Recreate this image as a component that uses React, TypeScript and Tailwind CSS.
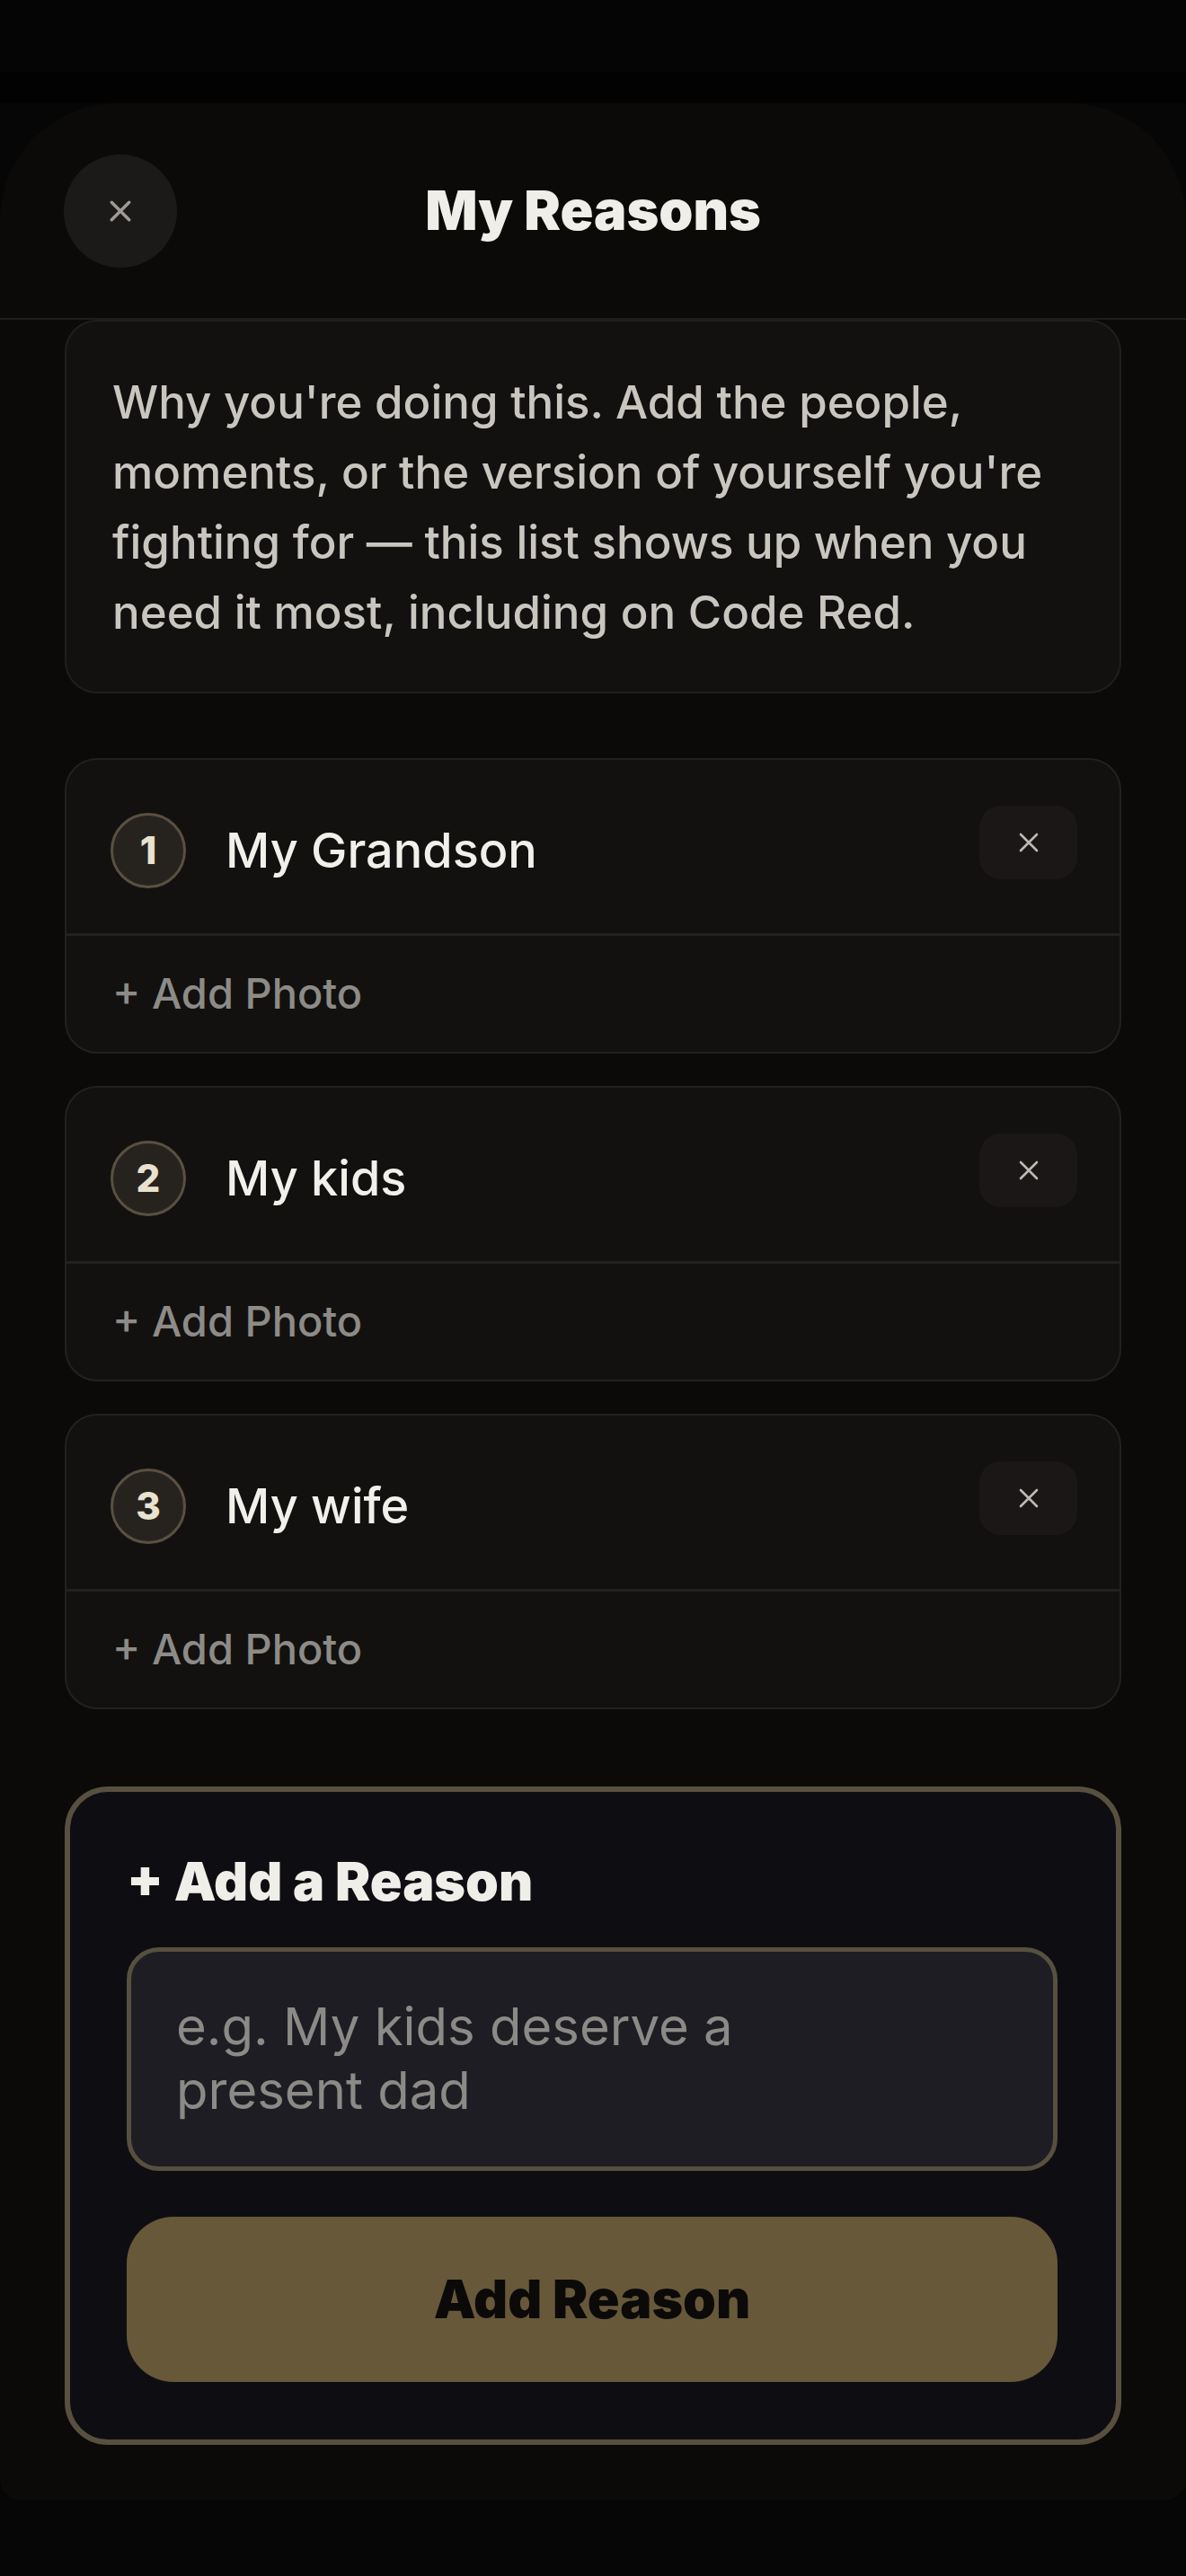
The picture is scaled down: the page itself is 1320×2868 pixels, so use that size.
import React from "react";

const XIcon = ({ size, stroke, color }: { size: number; stroke: number; color: string }) => (
  <svg width={size} height={size} viewBox="0 0 24 24" fill="none">
    <path d="M3 3L21 21M21 3L3 21" stroke={color} strokeWidth={stroke} strokeLinecap="round" />
  </svg>
);

const reasons = [
  { n: 1, text: "My Grandson" },
  { n: 2, text: "My kids" },
  { n: 3, text: "My wife" },
];

function ReasonCard({ n, text }: { n: number; text: string }) {
  return (
    <div className="rounded-[36px] border-2 border-[#232120] bg-[#121110]">
      <div className="flex items-start justify-between pl-[49px] pr-[47px] pt-[51px] h-[196px] border-b-[3px] border-[#232120]">
        <div className="flex items-center gap-[44px] mt-[8px]">
          <div className="w-[84px] h-[84px] rounded-full border-[3px] border-[#5a5040] bg-[#26231f] flex items-center justify-center text-[42px] font-extrabold text-[#e8e2cf] leading-none">
            {n}
          </div>
          <div className="text-[54px] font-medium text-[#f2f0ea] leading-none">{text}</div>
        </div>
        <div className="w-[109px] h-[82px] rounded-[24px] bg-[#1a1716] flex items-center justify-center">
          <XIcon size={24} stroke={2.6} color="#bdbab3" />
        </div>
      </div>
      <div className="h-[129px] flex items-center pl-[51px] text-[47px] font-medium text-[#8d8b87]">
        + Add Photo
      </div>
    </div>
  );
}

export default function App() {
  return (
    <div
      className="min-h-[2868px] w-[1320px] bg-[#060606]"
      style={{ fontFamily: "Inter, 'Noto Sans', sans-serif" }}
    >
      <div className="h-[80px] bg-[#050505]" />
      <div className="h-[35px] bg-[#020202]" />
      <div className="rounded-t-[130px] rounded-b-[24px] bg-[#0b0a09] pb-[62px]">
        {/* Header */}
        <div className="h-[241px] border-b-2 border-[#1f1e1d] grid grid-cols-[126px_1fr_126px] items-center px-[71px]">
          <div className="w-[126px] h-[126px] rounded-full bg-[#1c1a19] flex items-center justify-center">
            <XIcon size={26} stroke={3.2} color="#9e9b95" />
          </div>
          <div className="text-center text-[61px] font-black text-[#f0eee8] leading-none">
            My Reasons
          </div>
          <div />
        </div>

        {/* Content */}
        <div className="px-[72px] flex flex-col">
          <div className="rounded-[36px] border-2 border-[#201f1e] bg-[#121110] pl-[51px] pr-[30px] pt-[51px] pb-[49px] text-[51px] leading-[78px] text-[#c9c6bf] font-medium whitespace-nowrap">
            Why you're doing this. Add the people,
            <br />
            moments, or the version of yourself you're
            <br />
            fighting for — this list shows up when you
            <br />
            need it most, including on Code Red.
          </div>

          <div className="mt-[72px] flex flex-col gap-[36px]">
            {reasons.map((r) => (
              <ReasonCard key={r.n} n={r.n} text={r.text} />
            ))}
          </div>

          <div className="mt-[86px] rounded-[48px] border-[6px] border-[#57503f] bg-[#0e0e12] pl-[63px] pr-[65px] pt-[70px] pb-[64px]">
            <div className="text-[59px] font-black text-[#f0eee8] leading-none">
              + Add a Reason
            </div>
            <div className="mt-[44px] rounded-[36px] border-[5px] border-[#57503f] bg-[#1e1d23] pl-[50px] pt-[48px] pb-[49px] text-[58px] leading-[71px] text-[#8b8a86] whitespace-nowrap">
              e.g. My kids deserve a
              <br />
              present dad
            </div>
            <div className="mt-[51px] h-[184px] rounded-[52px] bg-[#665839] flex items-center justify-center text-[59px] font-black text-[#0b0a09]">
              Add Reason
            </div>
          </div>
        </div>
      </div>
    </div>
  );
}
